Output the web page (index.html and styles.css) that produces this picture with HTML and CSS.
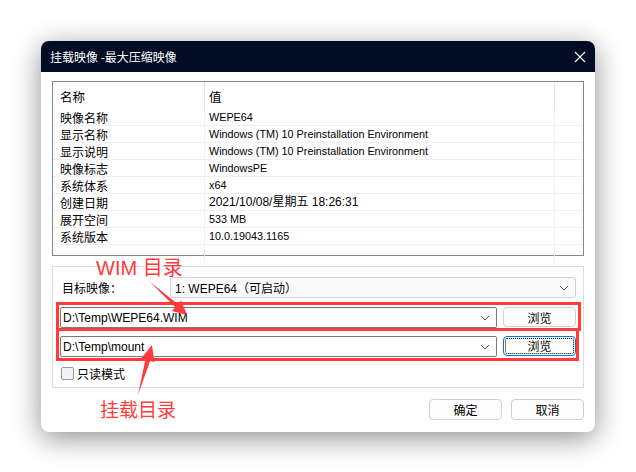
FILE: index.html
```html
<!DOCTYPE html>
<html lang="zh-CN">
<head>
  <meta charset="UTF-8">
  <title>挂载映像</title>
  <link rel="stylesheet" href="styles.css">
</head>
<body>

<div class="dialog">
  <div class="titlebar">
    <span class="title">挂载映像 -最大压缩映像</span>
    <svg class="close" width="12" height="12" viewBox="0 0 12 12">
      <path d="M1 1 L11 11 M11 1 L1 11" stroke="#fff" stroke-width="1.1" fill="none"/>
    </svg>
  </div>

  <div class="content">
    <div class="list">
      <div class="row head">
        <div class="c1">名称</div><div class="c2">值</div><div class="c3"></div>
      </div>
      <div class="row"><div class="c1">映像名称</div><div class="c2">WEPE64</div><div class="c3"></div></div>
      <div class="row"><div class="c1">显示名称</div><div class="c2">Windows (TM) 10 Preinstallation Environment</div><div class="c3"></div></div>
      <div class="row"><div class="c1">显示说明</div><div class="c2">Windows (TM) 10 Preinstallation Environment</div><div class="c3"></div></div>
      <div class="row"><div class="c1">映像标志</div><div class="c2">WindowsPE</div><div class="c3"></div></div>
      <div class="row"><div class="c1">系统体系</div><div class="c2">x64</div><div class="c3"></div></div>
      <div class="row"><div class="c1">创建日期</div><div class="c2 wide">2021/10/08/星期五 18:26:31</div><div class="c3"></div></div>
      <div class="row"><div class="c1">展开空间</div><div class="c2">533 MB</div><div class="c3"></div></div>
      <div class="row"><div class="c1">系统版本</div><div class="c2">10.0.19043.1165</div><div class="c3"></div></div>
      <div class="row last"><div class="c1"></div><div class="c2"></div><div class="c3"></div></div>
    </div>

    <div class="group">
      <div class="target">
        <span class="label">目标映像：</span>
        <div class="combo flat">
          <span>1: WEPE64（可启动）</span>
          <svg class="chev" width="10" height="6" viewBox="0 0 10 6"><path d="M1 1 L5 5 L9 1" stroke="#555" fill="none"/></svg>
        </div>
      </div>

      <div class="mark first">
        <div class="combo edit">
          <span>D:\Temp\WEPE64.WIM</span>
          <svg class="chev" width="10" height="6" viewBox="0 0 10 6"><path d="M1 1 L5 5 L9 1" stroke="#555" fill="none"/></svg>
        </div>
        <button class="btn browse">浏览</button>
      </div>
      <div class="mark second">
        <div class="combo edit">
          <span>D:\Temp\mount</span>
          <svg class="chev" width="10" height="6" viewBox="0 0 10 6"><path d="M1 1 L5 5 L9 1" stroke="#555" fill="none"/></svg>
        </div>
        <button class="btn browse focus"><span>浏览</span></button>
      </div>

      <label class="check"><span class="box"></span>只读模式</label>
    </div>

    <div class="footer">
      <button class="btn">确定</button>
      <button class="btn">取消</button>
    </div>
  </div>
</div>

<div class="note note-wim">WIM 目录</div>
<div class="note note-mount">挂载目录</div>
<svg class="arrows" width="636" height="472" viewBox="0 0 636 472">
  <polygon fill="#ff3b3b" points="149,281 177.9,304.2 181.3,300.5 187,315 171.9,310.9 175.3,307.2"/>
  <polygon fill="#ff3b3b" points="138,395 150.1,361.1 154.4,362.3 152,345 141,358.5 145.3,359.7"/>
</svg>

</body>
</html>
```

FILE: styles.css
```css
body {
  margin: 0;
  background: #fff;
  font-family: "Liberation Sans", "Noto Sans CJK SC", sans-serif;
  font-size: 12px;
  color: #000;
  width: 636px;
  height: 472px;
  overflow: hidden;
  position: relative;
}

.dialog {
  position: absolute;
  left: 41px;
  top: 41px;
  width: 554px;
  height: 391px;
  background: #fff;
  border-radius: 8px;
  overflow: hidden;
  box-shadow: 0 6px 28px rgba(0, 0, 0, 0.45);
}

.titlebar {
  height: 31px;
  background: #010b23;
  color: #fff;
  display: flex;
  align-items: center;
  justify-content: space-between;
  padding: 0 9px 0 9px;
}

.title {
  font-family: "Noto Sans CJK SC", sans-serif;
  font-size: 12px;
}

.content {
  padding: 9px 11px 0 11px;
}

.list {
  height: 175px;
  border: 1px solid #828790;
  box-sizing: border-box;
  background: #fff;
}

.row {
  display: flex;
  height: 17px;
  line-height: 17px;
  border-bottom: 1px solid #f0f0f0;
  box-sizing: border-box;
}

.row.head {
  height: 27px;
  line-height: 29px;
  border-bottom: none;
  font-size: 13px;
}

.row.last {
  border-bottom: none;
}

.c1 {
  width: 144px;
  padding-left: 7px;
  border-right: 1px solid #f0f0f0;
  font-family: "Noto Sans CJK SC", sans-serif;
  font-size: 12px;
}

.c2 {
  width: 345px;
  padding-left: 4px;
  border-right: 1px solid #f0f0f0;
  font-size: 10.8px;
  white-space: nowrap;
}

.c2.wide {
  font-size: 12px;
}

.c3 {
  flex: 1;
}

.row.head .c1,
.row.head .c2 {
  font-family: "Noto Sans CJK SC", sans-serif;
  font-size: 12.5px;
  border-right-color: #e5e5e5;
}

.group {
  margin-top: 10px;
  height: 122px;
  box-sizing: border-box;
  border: 1px solid #dcdcdc;
  padding: 10px 7px 0 3px;
}

.target {
  display: flex;
  align-items: center;
  height: 21px;
  padding-left: 6px;
  margin-bottom: 4px;
}

.label {
  font-family: "Noto Sans CJK SC", sans-serif;
  width: 108px;
}

.combo {
  display: flex;
  align-items: center;
  justify-content: space-between;
  box-sizing: border-box;
  height: 21px;
  padding: 0 6px 0 4px;
  font-size: 12px;
}

.combo.flat {
  flex: 1;
  border: 1px solid #d0d0d0;
  border-radius: 3px;
  background: #fafafa;
}

.combo.edit {
  width: 437px;
  border: 1px solid #7a7a7a;
  border-radius: 2px;
  background: #fff;
  padding-left: 2px;
}

.mark {
  display: flex;
  align-items: flex-start;
  box-sizing: border-box;
  border: 3px solid #ff3b3b;
  margin-right: -5px;
}

.mark.first {
  height: 29px;
  padding: 2px 0 0 1px;
}

.mark.second {
  height: 30px;
  border-top: none;
  padding: 5px 0 0 1px;
  margin-right: -3px;
}

.btn {
  font-family: "Noto Sans CJK SC", sans-serif;
  font-size: 12px;
  width: 73px;
  height: 21px;
  padding: 0;
  background: #fdfdfd;
  border: 1px solid #d0d0d0;
  border-radius: 4px;
  color: #000;
}

.browse {
  margin-left: 6px;
  height: 20px;
}

.browse.focus {
  border: 1px solid #0078d7;
  padding: 1px;
}

.browse.focus span {
  display: block;
  height: 100%;
  box-sizing: border-box;
  border: 1px dotted #000;
  border-radius: 2px;
  line-height: 14px;
}

.check {
  display: flex;
  align-items: center;
  font-family: "Noto Sans CJK SC", sans-serif;
  margin-top: 5px;
  padding-left: 5px;
  height: 14px;
}

.box {
  width: 11px;
  height: 11px;
  border: 1px solid #999;
  border-radius: 2px;
  background: #f4f4f4;
  margin-right: 3px;
}

.footer {
  display: flex;
  justify-content: flex-end;
  gap: 9px;
  margin-top: 11px;
  padding-right: 0;
}

.note {
  position: absolute;
  color: #ff3b3b;
  font-family: "Liberation Sans", "Noto Sans CJK SC", sans-serif;
  font-size: 20px;
  line-height: 22px;
  white-space: nowrap;
}

.note-wim {
  left: 96px;
  top: 257px;
}

.note-mount {
  left: 100px;
  top: 400px;
  font-size: 19px;
}

.arrows {
  position: absolute;
  left: 0;
  top: 0;
  pointer-events: none;
}
```
